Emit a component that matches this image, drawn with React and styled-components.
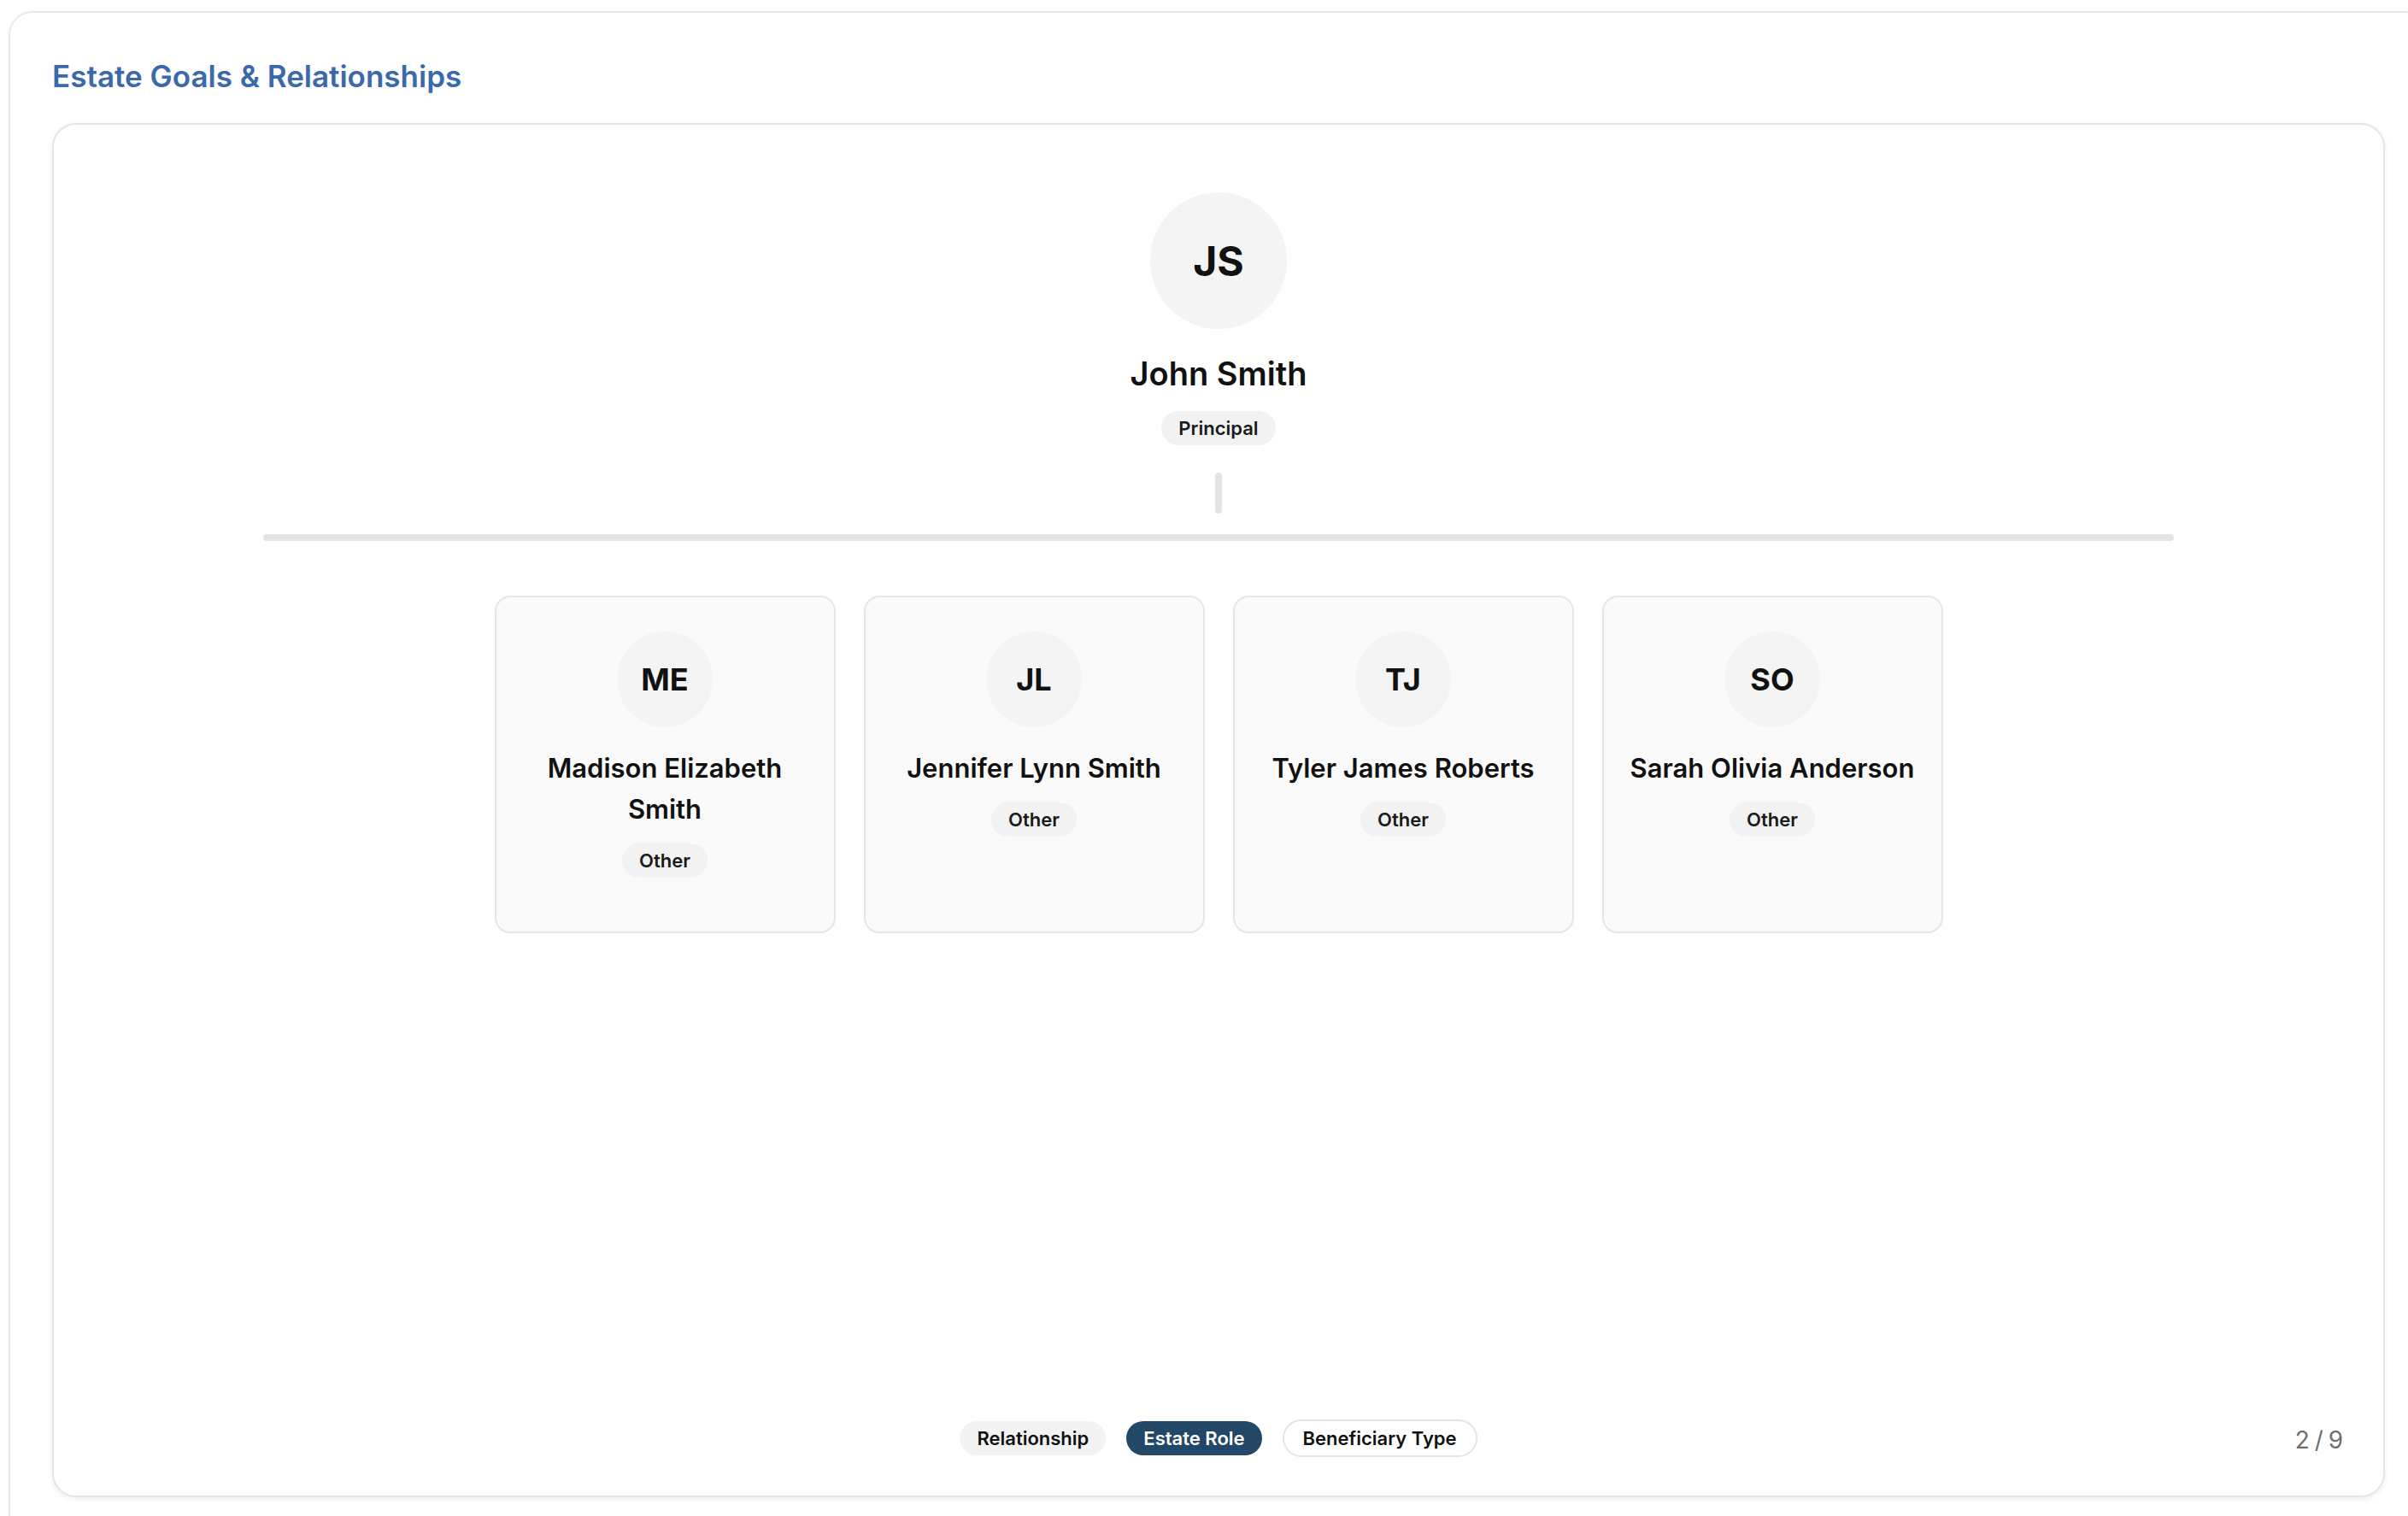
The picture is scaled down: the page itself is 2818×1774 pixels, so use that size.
import React from "react";
import styled, { createGlobalStyle } from "styled-components";

const GlobalStyle = createGlobalStyle`
  html, body {
    margin: 0;
    padding: 0;
    background: #ffffff;
    overflow: hidden;
  }

  body {
    font-family: Inter, "Noto Sans", "Liberation Sans", sans-serif;
    color: #111111;
  }
`;

const Page = styled("div")`
  padding: 13px 0 0 10px;
`;

const Panel = styled("section")`
  box-sizing: border-box;
  width: 2832px;
  min-height: 1800px;
  padding: 54px 49px 40px;
  background: #ffffff;
  border: 2px solid #e8e8e8;
  border-radius: 28px;
  box-shadow: 0px 1px 4px rgba(0, 0, 0, 0.04);
`;

const Title = styled("h2")`
  margin: 0;
  font-size: 35px;
  line-height: 40px;
  font-weight: 600;
  color: #3b69a9;
`;

const Tree = styled("div")`
  box-sizing: border-box;
  width: 2730px;
  height: 1608px;
  margin-top: 35px;
  padding-top: 79px;
  display: flex;
  flex-direction: column;
  align-items: center;
  background: #ffffff;
  border: 2px solid #e6e6e6;
  border-radius: 28px;
  box-shadow: 0px 2px 6px rgba(0, 0, 0, 0.07);
`;

const Avatar = styled("div")`
  width: ${({ size }) => size}px;
  height: ${({ size }) => size}px;
  flex-shrink: 0;
  border-radius: 50%;
  background: #f4f4f4;
  display: flex;
  align-items: center;
  justify-content: center;
  font-size: ${({ size }) => (size > 140 ? 48 : 36)}px;
  font-weight: 700;
  color: #111111;
`;

const PrincipalName = styled("div")`
  margin-top: 28px;
  font-size: 38px;
  line-height: 48px;
  font-weight: 600;
`;

const Tag = styled("span")`
  display: inline-flex;
  align-items: center;
  height: 40px;
  padding: 0 20px;
  border-radius: 20px;
  background: #f2f2f2;
  font-size: 22px;
  font-weight: 600;
  color: #1a1a1a;
  margin-top: ${({ gap }) => gap}px;
`;

const Stem = styled("div")`
  width: 8px;
  height: 48px;
  margin-top: 32px;
  border-radius: 4px;
  background: #e4e4e4;
`;

const Branch = styled("div")`
  width: 82%;
  height: 8px;
  margin-top: 24px;
  border-radius: 4px;
  background: #e4e4e4;
`;

const Members = styled("div")`
  display: grid;
  grid-template-columns: repeat(4, 399px);
  gap: 33px;
  margin-top: 64px;
`;

const MemberCard = styled("div")`
  box-sizing: border-box;
  height: 395px;
  padding: 40px 22px;
  display: flex;
  flex-direction: column;
  align-items: center;
  background: #fafafa;
  border: 2px solid #e6e6e6;
  border-radius: 18px;
`;

const MemberName = styled("div")`
  margin-top: 24px;
  font-size: 31px;
  line-height: 48px;
  font-weight: 600;
  text-align: center;
`;

const Footer = styled("div")`
  margin-top: auto;
  width: 100%;
  box-sizing: border-box;
  padding: 0 47px 45px;
  display: grid;
  grid-template-columns: 1fr auto 1fr;
  align-items: center;
`;

const Toggles = styled("div")`
  grid-column: 2;
  display: flex;
  align-items: center;
  gap: 24px;
`;

const Toggle = styled("button")`
  box-sizing: border-box;
  height: ${({ variant }) => (variant === "outline" ? 44 : 40)}px;
  padding: 0 ${({ variant }) => (variant === "outline" ? 22 : 20)}px;
  border-radius: 22px;
  font-family: inherit;
  font-size: 22px;
  font-weight: 600;
  cursor: pointer;
  border: ${({ variant }) => (variant === "outline" ? "2px solid #e4e4e4" : "none")};
  background: ${({ variant }) =>
    variant === "active" ? "#234766" : variant === "outline" ? "#ffffff" : "#f3f3f3"};
  color: ${({ variant }) => (variant === "active" ? "#ffffff" : "#111111")};
`;

const Counter = styled("div")`
  grid-column: 3;
  justify-self: end;
  font-size: 28px;
  color: #6f6f6f;
  word-spacing: -2px;
  padding-top: 3px;
`;

const members = [
  { initials: "ME", name: "Madison Elizabeth Smith", role: "Other" },
  { initials: "JL", name: "Jennifer Lynn Smith", role: "Other" },
  { initials: "TJ", name: "Tyler James Roberts", role: "Other" },
  { initials: "SO", name: "Sarah Olivia Anderson", role: "Other" },
];

const views = [
  { label: "Relationship", variant: "soft" },
  { label: "Estate Role", variant: "active" },
  { label: "Beneficiary Type", variant: "outline" },
];

export default function App() {
  return (
    <Page>
      <GlobalStyle />
      <Panel>
        <Title>Estate Goals &amp; Relationships</Title>
        <Tree>
          <Avatar size={160}>JS</Avatar>
          <PrincipalName>John Smith</PrincipalName>
          <Tag gap={20}>Principal</Tag>
          <Stem />
          <Branch />
          <Members>
            {members.map((m) => (
              <MemberCard key={m.initials}>
                <Avatar size={112}>{m.initials}</Avatar>
                <MemberName>{m.name}</MemberName>
                <Tag gap={16}>{m.role}</Tag>
              </MemberCard>
            ))}
          </Members>
          <Footer>
            <Toggles>
              {views.map((v) => (
                <Toggle key={v.label} variant={v.variant} type="button">
                  {v.label}
                </Toggle>
              ))}
            </Toggles>
            <Counter>2 / 9</Counter>
          </Footer>
        </Tree>
      </Panel>
    </Page>
  );
}
